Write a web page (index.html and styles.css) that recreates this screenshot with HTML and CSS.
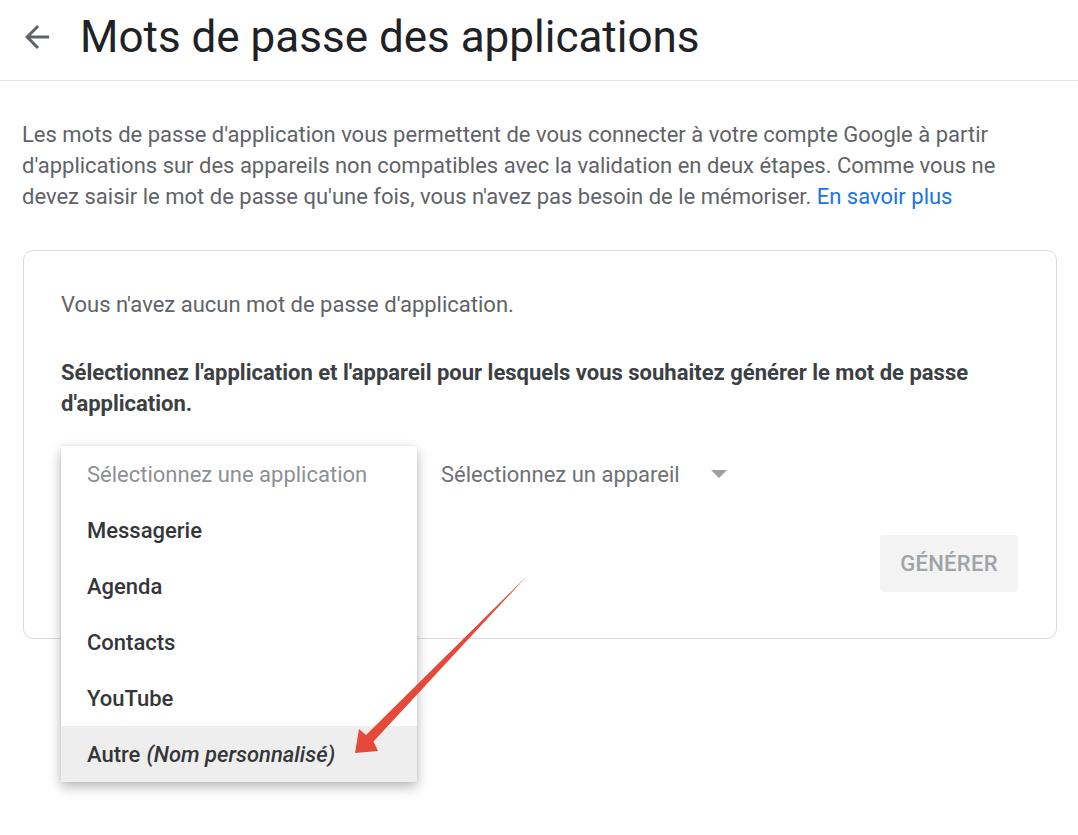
FILE: index.html
```html
<!DOCTYPE html>
<html lang="fr">
<head>
<meta charset="utf-8">
<title>Mots de passe des applications</title>
<link rel="stylesheet" href="styles.css">
</head>
<body>
<header class="topbar">
  <svg class="back" width="36" height="36" viewBox="0 0 24 24" aria-hidden="true"><path d="M20 11H7.83l5.59-5.59L12 4l-8 8 8 8 1.41-1.41L7.83 13H20v-2z" fill="#5f6368"/></svg>
  <h1 class="title">Mots de passe des applications</h1>
</header>
<main class="content">
  <p class="intro">Les mots de passe d'application vous permettent de vous connecter à votre compte Google à partir d'applications sur des appareils non compatibles avec la validation en deux étapes. Comme vous ne devez saisir le mot de passe qu'une fois, vous n'avez pas besoin de le mémoriser. <a class="link" href="#">En savoir plus</a></p>
  <section class="card">
    <p class="empty">Vous n'avez aucun mot de passe d'application.</p>
    <p class="instr">Sélectionnez l'application et l'appareil pour lesquels vous souhaitez générer le mot de passe d'application.</p>
    <div class="selects">
      <div class="select app">
        <ul class="menu">
          <li class="item placeholder">Sélectionnez une application</li>
          <li class="item">Messagerie</li>
          <li class="item">Agenda</li>
          <li class="item">Contacts</li>
          <li class="item">YouTube</li>
          <li class="item active">Autre <em>(Nom personnalisé)</em></li>
        </ul>
      </div>
      <div class="select device">
        <span>Sélectionnez un appareil</span>
        <span class="caret"></span>
      </div>
    </div>
    <div class="actions">
      <button class="gen" type="button">GÉNÉRER</button>
    </div>
  </section>
</main>
<svg class="annot" width="1078" height="835" viewBox="0 0 1078 835" aria-hidden="true">
  <polygon fill="#e4493a" points="526,577 373.5,741.5 378,751 355,753 359,729 366,735"/>
</svg>
</body>
</html>
```
FILE: styles.css
```css
* { box-sizing: border-box; }
html, body { margin: 0; padding: 0; background: #fff; }
body {
  font-family: Roboto, "Noto Sans", Arial, sans-serif;
  color: #5f6368;
  width: 1078px;
  height: 835px;
  overflow: hidden;
  position: relative;
}
.topbar {
  height: 81px;
  display: flex;
  align-items: center;
  border-bottom: 1px solid #e3e3e6;
  padding-left: 19px;
  padding-bottom: 6px;
}
.back { width: 36px; height: 36px; flex: none; }
.title {
  margin: 0 0 0 25px;
  font-size: 44px;
  font-weight: 400;
  color: #202124;
  letter-spacing: 0;
}
.content { padding: 38px 0 0 22px; }
.intro {
  margin: 0;
  width: 1020px;
  font-size: 22px;
  line-height: 31px;
  color: #5f6368;
}
.link { color: #1a73e8; text-decoration: none; }
.card {
  margin-top: 38px;
  margin-left: 1px;
  width: 1034px;
  border: 1px solid #dadce0;
  border-radius: 10px;
  padding: 38px 38px 46px 37px;
}
.empty, .instr {
  margin: 0;
  font-size: 22px;
  line-height: 31px;
}
.empty { color: #5f6368; }
.instr {
  margin-top: 37px;
  font-weight: 700;
  color: #3c4043;
}
.selects {
  margin-top: 27px;
  height: 56px;
  display: flex;
  align-items: center;
  gap: 24px;
}
.select { font-size: 22px; }
.app { position: relative; width: 356px; height: 56px; flex: none; }
.menu {
  position: absolute;
  left: 0;
  top: 0;
  width: 356px;
  margin: 0;
  padding: 0;
  list-style: none;
  background: #fff;
  box-shadow: 0 5px 12px rgba(0,0,0,0.28), 0 0 4px rgba(0,0,0,0.06);
  z-index: 2;
}
.item {
  height: 56px;
  display: flex;
  align-items: center;
  padding-left: 26px;
  font-size: 22px;
  font-weight: 500;
  color: #35363a;
}
.item.placeholder { color: #8d9094; font-weight: 400; }
.item.active { background: #eeeeee; }
.item em { font-style: italic; margin-left: 6px; }
.device {
  display: flex;
  align-items: center;
  color: #6e7175;
}
.caret {
  margin-left: 31px;
  width: 0;
  height: 0;
  border-left: 8px solid transparent;
  border-right: 8px solid transparent;
  border-top: 8px solid #9e9e9e;
}
.actions {
  margin-top: 33px;
  display: flex;
  justify-content: flex-end;
}
.gen {
  width: 138px;
  height: 57px;
  border: none;
  border-radius: 4px;
  background: #f3f3f3;
  color: #a0a3a8;
  font-family: Roboto, "Noto Sans", Arial, sans-serif;
  font-size: 22px;
  font-weight: 500;
  letter-spacing: 0.3px;
}
.annot { position: absolute; left: 0; top: 0; z-index: 5; pointer-events: none; }
```
